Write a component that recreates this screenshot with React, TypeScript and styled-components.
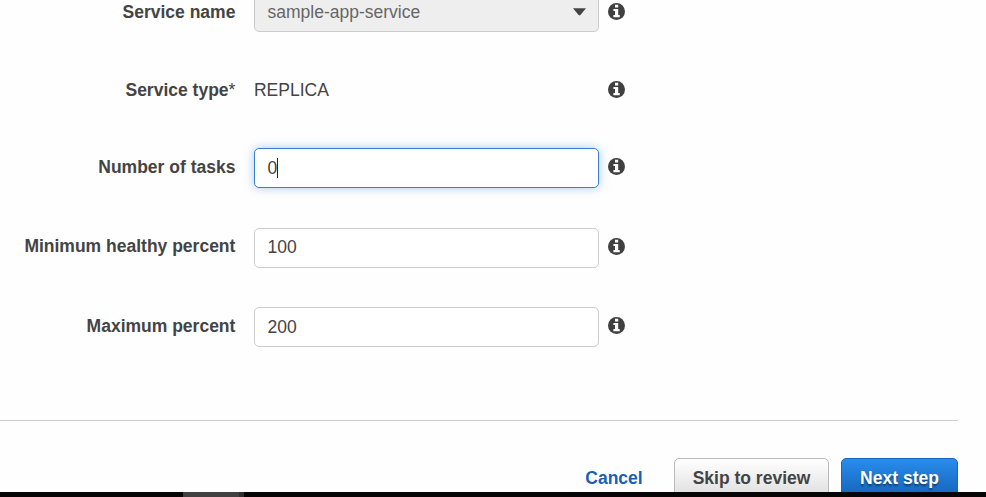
import React from "react";
import styled, { createGlobalStyle, css } from "styled-components";

const GlobalStyle = createGlobalStyle`
  * { box-sizing: border-box; }
  body { margin: 0; background: #fefefe; }
`;

const Page = styled.div`
  width: 986px;
  height: 497px;
  overflow: hidden;
  display: flex;
  flex-direction: column;
  background: #fefefe;
  color: #444;
  font: 17.5px/24px "Liberation Sans", Arial, sans-serif;
`;

const Form = styled.div`
  margin-top: -8px;
  height: 428px;
  flex: none;
`;

const Row = styled.div<{ $gap: number }>`
  display: grid;
  grid-template-columns: 235.4px 345px 17px;
  column-gap: 18.6px;
  align-items: center;
  height: 40px;
  margin-bottom: ${(p) => p.$gap}px;
`;

const Label = styled.label<{ $lift?: number }>`
  text-align: right;
  font-weight: bold;
  white-space: nowrap;
  padding-bottom: ${(p) => p.$lift ?? 0}px;
`;

const Required = styled.span`
  font-weight: normal;
`;

const fieldBox = css`
  display: flex;
  align-items: center;
  width: 345px;
  height: 40px;
  padding: 0 12px 1px 12.5px;
  border: 1px solid #ccc;
  border-radius: 5px;
`;

const Field = styled.div<{ $focused?: boolean; $lift?: number }>`
  ${fieldBox}
  padding-bottom: ${(p) => p.$lift ?? 1}px;
  background: #fff;
  ${(p) =>
    p.$focused &&
    css`
      border-color: #3a80cc;
      box-shadow: 0 0 10px rgba(82, 150, 235, 0.5);
    `}
`;

const Caret = styled.span`
  width: 1px;
  height: 20px;
  margin-left: -0.5px;
  background: #222;
`;

const Select = styled.div`
  ${fieldBox}
  justify-content: space-between;
  background: #eee;
  color: #666;
  padding-bottom: 0;
`;

const Arrow = styled.svg`
  width: 13px;
  height: 8px;
  fill: #444;
`;

const StaticValue = styled.span`
  line-height: 24px;
`;

const InfoSvg = styled.svg<{ $lift?: number }>`
  display: block;
  width: 17px;
  height: 17px;
  margin-left: -9.6px;
  margin-bottom: ${(p) => p.$lift ?? 0}px;
  fill: #404040;
`;

const Footer = styled.div`
  width: 958px;
  height: 72px;
  flex: none;
  overflow: hidden;
  display: flex;
  justify-content: flex-end;
  align-items: flex-start;
  gap: 12px;
  padding-top: 37px;
  border-top: 1px solid #ccc;
`;

const Button = styled.button<{ $kind: "link" | "plain" | "primary" }>`
  height: 40px;
  padding: 0;
  font: bold 17.5px/38px "Liberation Sans", Arial, sans-serif;
  border: 1px solid transparent;
  border-radius: 5px;
  ${(p) =>
    p.$kind === "link" &&
    css`
      color: #1a5fb4;
      background: none;
      width: 60px;
      margin-right: 18px;
    `}
  ${(p) =>
    p.$kind === "plain" &&
    css`
      width: 155px;
      color: #444;
      border-color: #bbb;
      background: linear-gradient(#fff, #dedede);
    `}
  ${(p) =>
    p.$kind === "primary" &&
    css`
      width: 117px;
      color: #fff;
      border-color: #1668bc;
      background: linear-gradient(#2a8cec, #1464ba);
      text-shadow: 0 2px 2px rgba(0, 0, 0, 0.45);
    `}
`;

const Taskbar = styled.div`
  height: 5px;
  flex: none;
  background: #070506;
  display: flex;
  padding-left: 183px;
`;

const TaskbarItem = styled.div`
  width: 61px;
  border-right: 5px solid #303030;
  background: #404040;
`;

const Info = ({ lift }: { lift?: number }) => (
  <InfoSvg $lift={lift} viewBox="0 0 17 17" aria-label="Info">
    <circle cx="8.5" cy="8.5" r="8.5" />
    <path
      fill="#fff"
      d="M7 1.8h3.2v2.8H7zM5.4 6h4.8v6h1.5v2.3H5.4V12H7V8.1H5.4z"
    />
  </InfoSvg>
);

export default function App() {
  return (
    <>
      <GlobalStyle />
      <Page>
        <Form>
          <Row $gap={38}>
            <Label>Service name</Label>
            <Select>
              sample-app-service
              <Arrow viewBox="0 0 13 8">
                <path d="M0 0.3h13L7.4 7.1q-.9.9-1.8 0z" />
              </Arrow>
            </Select>
            <Info lift={1} />
          </Row>
          <Row $gap={38}>
            <Label>
              Service type<Required>*</Required>
            </Label>
            <StaticValue>REPLICA</StaticValue>
            <Info lift={1} />
          </Row>
          <Row $gap={40}>
            <Label $lift={2}>Number of tasks</Label>
            <Field $focused>
              0<Caret />
            </Field>
            <Info lift={3} />
          </Row>
          <Row $gap={39}>
            <Label $lift={4}>Minimum healthy percent</Label>
            <Field $lift={2}>100</Field>
            <Info lift={4} />
          </Row>
          <Row $gap={0}>
            <Label $lift={2}>Maximum percent</Label>
            <Field>200</Field>
            <Info lift={3} />
          </Row>
        </Form>
        <Footer>
          <Button $kind="link">Cancel</Button>
          <Button $kind="plain">Skip to review</Button>
          <Button $kind="primary">Next step</Button>
        </Footer>
        <Taskbar>
          <TaskbarItem />
        </Taskbar>
      </Page>
    </>
  );
}
